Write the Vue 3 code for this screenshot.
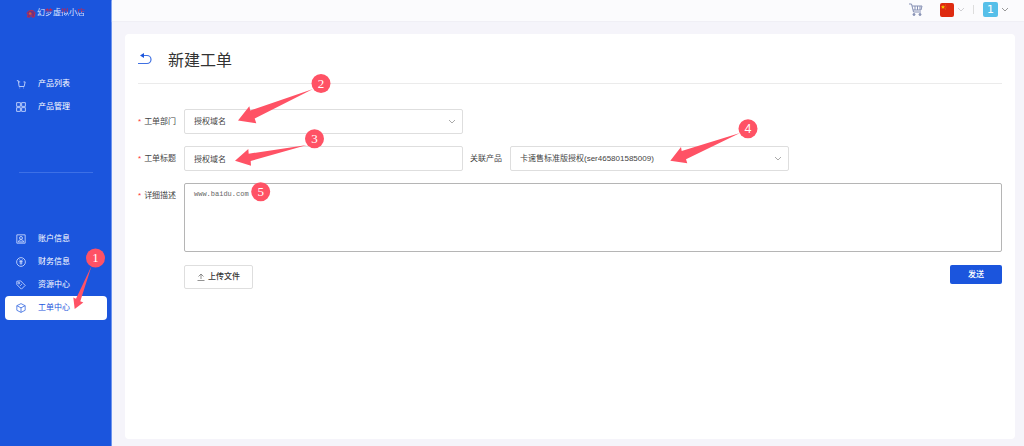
<script setup>
import { ref } from 'vue'

const current = ref('工单中心')
const productMenu = [
  { name: '产品列表', icon: 'cart' },
  { name: '产品管理', icon: 'grid' }
]
const accountMenu = [
  { name: '账户信息', icon: 'user' },
  { name: '财务信息', icon: 'money' },
  { name: '资源中心', icon: 'tag' },
  { name: '工单中心', icon: 'box' }
]
const icons = {
  cart: 'M2 4h3.5l2 14h12L22 7h-4M7 7h3M8.5 21.5h1.5M17.5 21.5h1.5',
  grid: 'M1.500 1.500h9v9h-9zM13.500 1.500h9v9h-9zM1.500 13.500h9v9h-9zM13.500 13.500h9v9h-9z',
  user: 'M2 2h20v20H2zM12 6a3.5 3.5 0 1 1 0 7a3.5 3.5 0 0 1 0-7M5.5 19c1-7 12-7 13 0z',
  money: 'M12 1.5a10.5 10.5 0 1 1 0 21a10.5 10.5 0 0 1 0-21M8.5 6l3.5 5l3.5-5M8 11h8M8.5 14.5h7M12 11v7.5',
  tag: 'M2 3v8l11 11l9-9L11 2zM7 5.5a2 2 0 1 1 0 4a2 2 0 0 1 0-4M10 14l4-4',
  box: 'M12 1.5l10 5v11l-10 5l-10-5v-11zM2 6.5l10 5l10-5M12 11.5v11'
}

const department = ref('授权域名')
const title = ref('授权域名')
const product = ref('卡速售标准版授权(ser465801585009)')
const detail = ref('www.baidu.com')

// Arrow outline order: tail, near shaft, near wing, tip, far wing, far shaft.
const marks = [
  { n: 1, x: 95.5, y: 258, arrow: '91.5,266 76,298.7 73.3,297.5 74.7,309 83.3,302.5 80.3,301.3' },
  { n: 2, x: 321, y: 83.5, arrow: '313,89 250.3,110.5 249.3,106.3 238,120.5 256.3,123.3 254.7,118.5' },
  { n: 3, x: 314.5, y: 138.7, arrow: '307,145 248.7,153.7 248.3,149 235,160.7 251,165.7 250.7,161' },
  { n: 4, x: 748, y: 128.7, arrow: '740,133 681.7,151 681,147 670.3,160.7 687.3,163.3 686,159.3' },
  { n: 5, x: 260.7, y: 191.7 }
]
</script>

<template>
  <div class="page">
    <aside class="side">
      <a class="logo" href="#">
        <svg viewBox="0 0 20 20" class="logo-mark">
          <path d="M1 10C3 2 16 0 19 9L17 18H12V11H8V18H2L4 11Z" fill="#70327f" stroke="#c22a4b" stroke-width="2" />
          <circle cx="8" cy="10" r="3" fill="#d2593f" />
        </svg>
        <span>幻<span class="rose">梦</span>虚<span class="rose">拟</span>小<span class="rose">店</span></span>
      </a>
      <nav class="menu">
        <a v-for="item in productMenu" :key="item.name" href="#" class="item" :class="{ active: current === item.name }" @click.prevent="current = item.name">
          <svg viewBox="0 0 24 24"><path :d="icons[item.icon]" /></svg>{{ item.name }}
        </a>
      </nav>
      <hr class="split" />
      <nav class="menu">
        <a v-for="item in accountMenu" :key="item.name" href="#" class="item" :class="{ active: current === item.name }" @click.prevent="current = item.name">
          <svg viewBox="0 0 24 24"><path :d="icons[item.icon]" /></svg>{{ item.name }}
        </a>
      </nav>
    </aside>

    <div class="main">
      <header class="top">
        <button class="plain basket" aria-label="购物车">
          <svg viewBox="0 0 14 13" width="14" height="13" fill="none" stroke="#8791b5">
            <path d="M0 1h2.5l2 8h7.5M3 3h10l-1 4H4M6 3v4M8.5 3v4M11 3v4" />
            <circle cx="5" cy="11.5" r="1" fill="#8791b5" /><circle cx="11" cy="11.5" r="1" fill="#8791b5" />
          </svg>
        </button>
        <button class="plain lang" aria-label="语言">
          <svg viewBox="0 0 14 14" width="14" height="14">
            <rect width="14" height="14" rx="2" fill="#de2a10" />
            <path d="M3 2l.6 1.3l1.4.1l-1 1l.3 1.4L3 5l-1.3.8l.3-1.4l-1-1l1.4-.1z" fill="#f4c400" />
            <path d="M5.5 1.5v1M6 3.5v1M5 6h1" stroke="#e88a10" stroke-width=".6" />
          </svg>
          <svg class="chev pale" viewBox="0 0 8 5"><path d="M1 1l3 3l3-3" /></svg>
        </button>
        <span class="bar"></span>
        <button class="plain account">
          <span class="avatar">1</span>
          <svg class="chev dark" viewBox="0 0 8 5"><path d="M1 1l3 3l3-3" /></svg>
        </button>
      </header>

      <main class="card">
        <div class="heading">
          <button class="plain" aria-label="返回">
            <svg viewBox="0 0 14 12" width="14" height="12">
              <path d="M3 2.5h6a4 4 0 0 1 0 8H0" fill="none" stroke="#3f70e2" stroke-width="1.2" />
              <path d="M2 2.5L6 0v5z" fill="#1b55dd" />
            </svg>
          </button>
          <h1>新建工单</h1>
        </div>
        <form class="form" @submit.prevent>
          <label class="need" for="department">工单部门</label>
          <div class="pick">
            <select id="department" v-model="department"><option>授权域名</option></select>
            <svg class="chev" viewBox="0 0 8 5"><path d="M1 1l3 3l3-3" /></svg>
          </div>

          <label class="need first" for="title">工单标题</label>
          <input id="title" v-model="title" type="text" />
          <label class="linked" for="product">关联产品</label>
          <div class="pick">
            <select id="product" v-model="product"><option>卡速售标准版授权(ser465801585009)</option></select>
            <svg class="chev" viewBox="0 0 8 5"><path d="M1 1l3 3l3-3" /></svg>
          </div>

          <label class="need first" for="detail">详细描述</label>
          <textarea id="detail" v-model="detail" spellcheck="false"></textarea>

          <div class="actions">
            <button type="button" class="upload">
              <svg viewBox="0 0 8 8" width="8" height="8"><path d="M4 6V1M1.5 3.5L4 1l2.5 2.5M.5 7.5h7" fill="none" stroke="#777" stroke-width=".8" /></svg>上传文件
            </button>
            <button type="submit" class="send">发送</button>
          </div>
        </form>
      </main>
    </div>

    <svg class="marks" width="1024" height="446" viewBox="0 0 1024 446">
      <g v-for="mark in marks" :key="mark.n">
        <polygon v-if="mark.arrow" :points="mark.arrow" />
        <circle :cx="mark.x" :cy="mark.y" r="9.5" />
        <text :x="mark.x" :y="mark.y + 4" :class="{ sans: mark.n === 4 }">{{ mark.n }}</text>
      </g>
    </svg>
  </div>
</template>

<style>
body {
  margin: 0;
  background: #f5f4fa;
}
</style>

<style scoped>
* {
  box-sizing: border-box;
}
.page {
  position: relative;
  display: flex;
  min-height: 100vh;
  overflow: hidden;
  font: 8px/12px "Liberation Sans", "Noto Sans CJK SC", sans-serif;
  color: #444;
}
button, input, select, textarea {
  font: inherit;
  color: inherit;
  margin: 0;
}
.side {
  flex: 0 0 112px;
  background: #1b55dd;
  border-right: 1px solid #6d94ee;
}
.logo {
  display: flex;
  align-items: center;
  justify-content: center;
  gap: 1px;
  height: 26px;
  margin-bottom: 46px;
  color: #dbe6ff;
  text-decoration: none;
}
.logo-mark {
  width: 10px;
  height: 9px;
}
.rose {
  background: linear-gradient(#d81f3c 35%, #dbe6ff 55%);
  background-clip: text;
  color: transparent;
}
.menu {
  padding: 0 4px 0 5px;
}
.item {
  display: flex;
  align-items: center;
  gap: 12px;
  height: 23px;
  padding-left: 11px;
  border-radius: 4px;
  color: #fff;
  text-decoration: none;
}
.item svg {
  width: 10px;
  height: 10px;
  fill: none;
  stroke: #d3e0ff;
  stroke-width: 2;
}
.item.active {
  height: 24px;
  background: #fff;
  color: #1b55dd;
}
.item.active svg {
  stroke: #3f70e2;
}
.split {
  height: 1px;
  margin: 54px 18px 54px 19px;
  border: 0;
  background: #3d70e6;
}
.main {
  flex: 1;
  min-width: 0;
  display: flex;
  flex-direction: column;
}
.top {
  display: flex;
  align-items: center;
  justify-content: flex-end;
  height: 21px;
  padding: 0 15px 2px 0;
  background: #fbfbfd;
  box-shadow: 0 1px 1px #f0eff5;
}
.plain {
  display: flex;
  align-items: center;
  padding: 0;
  border: 0;
  background: none;
}
.basket {
  margin-right: 17px;
}
.lang, .account {
  gap: 3px;
}
.chev {
  width: 8px;
  height: 5px;
  fill: none;
  stroke: #aaa;
}
.chev.pale {
  stroke: #d0d0d4;
}
.chev.dark {
  stroke: #999;
}
.bar {
  width: 1px;
  height: 9px;
  margin: 0 9px 0 8px;
  background: #ddd;
}
.avatar {
  width: 15px;
  height: 15px;
  border-radius: 2px;
  background: #56bfe9;
  color: #fff;
  font: 11px/15px "DejaVu Sans", sans-serif;
  text-align: center;
}
.card {
  flex: 1;
  margin: 13px 9px 7px 13px;
  padding: 0 13px;
  border-radius: 4px;
  background: #fff;
}
.heading {
  display: flex;
  align-items: center;
  gap: 16px;
  height: 50px;
  border-bottom: 1px solid #ebebeb;
}
h1 {
  margin: 4px 0 0;
  font-size: 16px;
  line-height: 24px;
  font-weight: 400;
  color: #333;
}
.form {
  display: grid;
  grid-template-columns: 46px minmax(0, 279fr) 47px minmax(0, 279fr) 213fr;
  row-gap: 12px;
  padding-top: 25px;
}
label {
  padding-top: 1px;
  line-height: 24px;
}
.need::before {
  content: "*";
  margin-right: 3px;
  color: #f33;
}
.first {
  grid-column: 1;
}
.linked {
  padding-left: 7px;
}
input, .pick select {
  width: 100%;
  height: 25px;
  padding: 0 9px;
  border: 1px solid #dedede;
  border-radius: 2px;
  background: #fff;
  appearance: none;
  outline: 0;
}
.pick select {
  padding-top: 1px;
}
.pick {
  display: grid;
  align-items: center;
}
.pick > * {
  grid-area: 1 / 1;
}
.pick .chev {
  justify-self: end;
  margin-right: 7px;
  pointer-events: none;
}
textarea {
  grid-column: 2 / -1;
  height: 69px;
  padding: 4px 9px;
  border: 1px solid #b5b5b5;
  border-radius: 2px;
  color: #666;
  font: 7px/12px "Liberation Mono", monospace;
  resize: none;
  outline: 0;
}
.actions {
  grid-column: 2 / -1;
  display: flex;
  align-items: flex-start;
  justify-content: space-between;
  padding-top: 1px;
}
.upload {
  display: flex;
  align-items: center;
  gap: 3px;
  height: 24px;
  padding: 0 12px;
  border: 1px solid #dedede;
  border-radius: 2px;
  background: #fff;
  color: #333;
  font-weight: 500;
}
.send {
  height: 19px;
  padding: 0 18px;
  border: 0;
  border-radius: 2px;
  background: #1b55dd;
  color: #fff;
  font-weight: 500;
}
.marks {
  position: absolute;
  top: 0;
  left: 0;
  fill: #ff5265;
  pointer-events: none;
}
.marks text {
  fill: #fff;
  font: 13px "Liberation Serif", serif;
  text-anchor: middle;
}
.marks .sans {
  font: 12px "Noto Sans", sans-serif;
}
</style>
